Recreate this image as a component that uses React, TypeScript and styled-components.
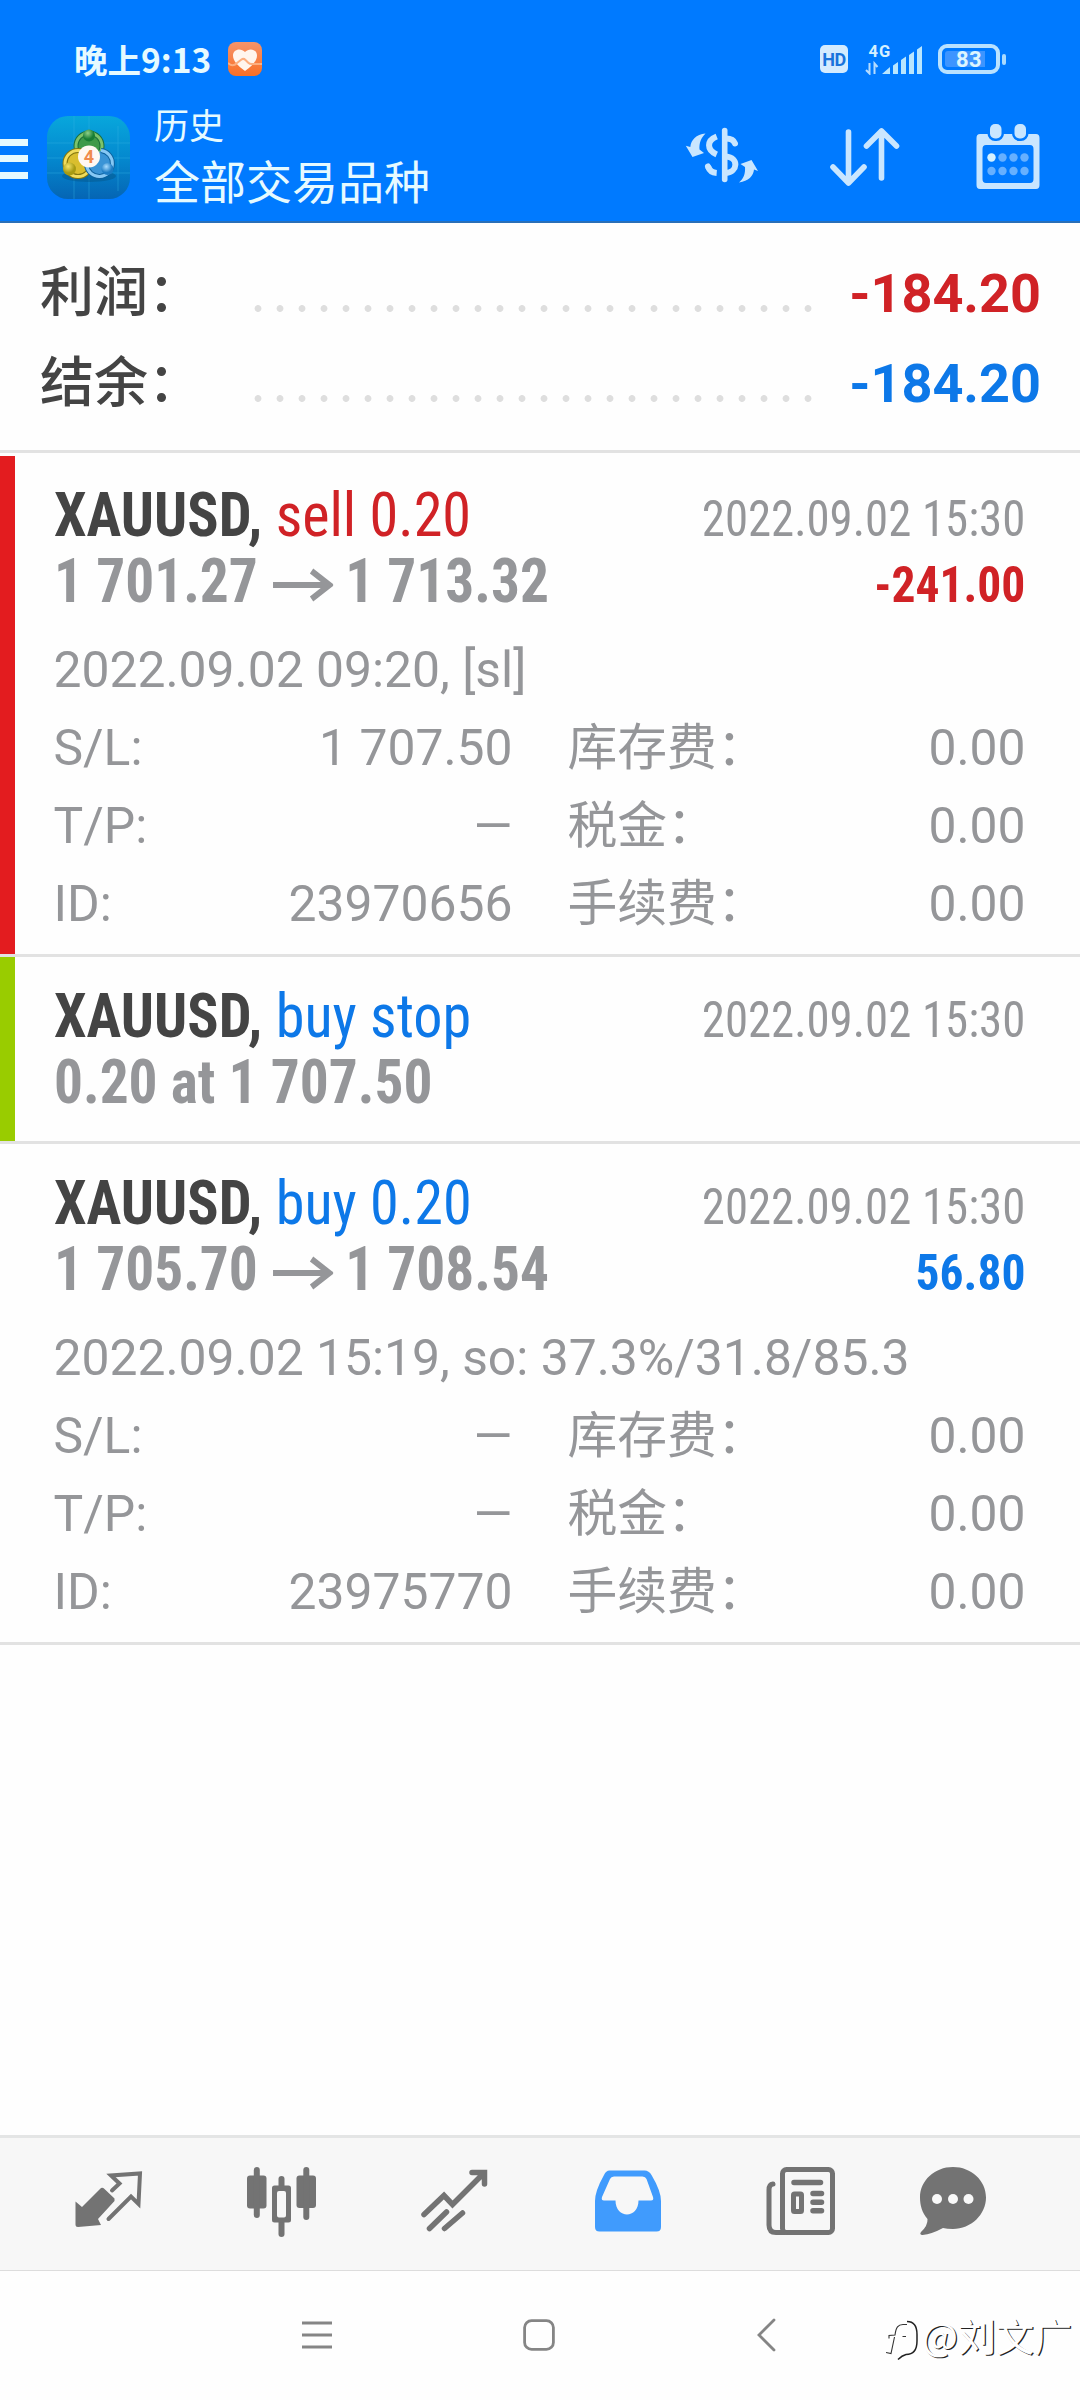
import React from "react";
import styled, { createGlobalStyle } from "styled-components";

const CJK = '"Noto Sans CJK SC", sans-serif';
const ROBOTO = `Roboto, ${CJK}`;
const CONDENSED = `"Roboto Condensed", Roboto, ${CJK}`;

const color = {
  brand: "#007aff",
  onBrand: "#e6faff",
  icon: "#c9e6ff",
  ink: "#444444",
  muted: "#959699",
  red: "#d02226",
  blue: "#0d78e8",
  line: "#e2e2e2",
  tab: "#737373",
  tabActive: "#409bfd",
};

const GlobalStyle = createGlobalStyle`
  body { margin: 0; background: #fefefe; }
  svg { display: block; flex: none; }
`;

const Screen = styled.div`
  width: 1080px;
  height: 2400px;
  display: flex;
  flex-direction: column;
  overflow: hidden;
  background: #fefefe;
  font-family: ${ROBOTO};
`;

/* ---------- header ---------- */
const Header = styled.header`
  box-sizing: border-box;
  height: 223px;
  flex: none;
  background: ${color.brand};
  border-bottom: 2px solid #2a6fb8;
`;

const StatusBar = styled.div`
  box-sizing: border-box;
  height: 92px;
  padding: 26px 74px 0 74px;
  display: flex;
  align-items: center;
`;

const Clock = styled.div`
  display: flex;
  align-items: center;
  color: ${color.onBrand};
  font: 700 33.5px/40px ${CJK};
  margin-right: 17px;
  white-space: nowrap;
`;

const StatusIcons = styled.div`
  margin-left: auto;
  display: flex;
  align-items: center;
`;

const HdBadge = styled.div`
  width: 28px;
  height: 28px;
  border-radius: 5px;
  background: #d3ebff;
  color: #1973dc;
  font: 700 18px/29px ${ROBOTO};
  text-align: center;
  letter-spacing: -0.5px;
`;

const Signal = styled.div`
  width: 58px;
  height: 32px;
  margin: 0 15px 0 17px;
`;

const Battery = styled.div`
  display: flex;
  align-items: center;
  gap: 2px;
`;

const BatteryBody = styled.div`
  box-sizing: border-box;
  width: 62px;
  height: 30px;
  padding: 3px;
  border: 4px solid #b9e2ff;
  border-radius: 9px;
`;

const BatteryLevel = styled.div`
  width: 100%;
  height: 100%;
  border-radius: 3px;
  background: linear-gradient(to right, #3d95ff 83%, transparent 83%);
  color: #dcf5ff;
  font: 700 22px/17px ${ROBOTO};
  text-align: center;
  letter-spacing: 0.5px;
`;

const BatteryNub = styled.div`
  width: 4px;
  height: 11px;
  border-radius: 2px;
  background: #a9dbff;
`;

const Toolbar = styled.div`
  height: 130px;
  display: flex;
  align-items: center;
`;

const Hamburger = styled.div`
  width: 27.5px;
  padding-top: 3px;
  display: grid;
  gap: 9.5px;
`;

const HamburgerBar = styled.span`
  height: 7px;
  background: #e6faff;
`;

const Titles = styled.div`
  padding-bottom: 3px;
  color: ${color.onBrand};
  font-family: ${CJK};
  white-space: nowrap;
`;

const ScreenName = styled.div`
  font-size: 35px;
  line-height: 44px;
`;

const Filter = styled.div`
  margin-top: 3px;
  font-size: 46px;
  line-height: 60px;
`;

const Actions = styled.div`
  margin-left: auto;
  display: flex;
  align-items: center;
  padding-right: 40px;
`;

/* ---------- totals ---------- */
const Totals = styled.section`
  padding: 21px 39px 26px 40px;
  border-bottom: 3px solid ${color.line};
  margin-bottom: 3px;
`;

const TotalRow = styled.div`
  height: 90px;
  line-height: 90px;
  display: flex;
  align-items: baseline;
`;

const TotalLabel = styled.span`
  width: 207px;
  font-family: ${CJK};
  font-size: 54px;
  font-weight: 500;
  color: ${color.ink};
  white-space: nowrap;
`;

const Leader = styled.span`
  width: 572px;
  height: 7px;
  background: radial-gradient(circle at 11px 3.5px, #dedede 3px, transparent 3.8px) 0 0 / 22px 7px repeat-x;
`;

const TotalValue = styled.span<{ $tone: string }>`
  margin-left: auto;
  font-size: 54px;
  font-weight: 700;
  color: ${(p) => p.$tone};
  white-space: nowrap;
`;

/* ---------- deals ---------- */
const Deal = styled.article<{ $bar?: string }>`
  box-sizing: border-box;
  display: flex;
  border-bottom: 3px solid ${color.line};
  &::before {
    content: "";
    flex: none;
    width: 15px;
    background: ${(p) => p.$bar ?? "transparent"};
  }
`;

const DealBody = styled.div<{ $bottom: number }>`
  flex: 1;
  padding: 26px 54.5px ${(p) => p.$bottom}px 38.5px;
  color: ${color.muted};
`;

const HeadRow = styled.div`
  height: 66px;
  line-height: 66px;
  display: flex;
  justify-content: space-between;
  align-items: baseline;
  font-family: ${CONDENSED};
  white-space: nowrap;
`;

const Title = styled.span`
  font-size: 61px;
  transform: scaleX(0.954);
  transform-origin: left;
`;

const Symbol = styled.b`
  color: ${color.ink};
  font-weight: 700;
`;

const Side = styled.span<{ $tone: string }>`
  color: ${(p) => p.$tone};
`;

const Price = styled(Title)`
  font-weight: 700;
  display: inline-flex;
  align-items: baseline;
  transform: scaleX(0.94);
`;

const Time = styled.span`
  font-size: 49.5px;
  transform: scaleX(0.945);
  transform-origin: right;
`;

const Profit = styled(Time)<{ $tone: string }>`
  font-weight: 700;
  color: ${(p) => p.$tone};
  transform: scaleX(0.96);
`;

const DetailLine = styled.div`
  margin-top: 17px;
  height: 78px;
  font-size: 49.8px;
  line-height: 78px;
  white-space: nowrap;
`;

const DetailGrid = styled.div`
  display: grid;
  grid-template-columns: 459px 458px;
  column-gap: 55px;
  font-size: 49.8px;
  line-height: 78px;
`;

const Field = styled.div`
  height: 78px;
  display: flex;
  justify-content: space-between;
  align-items: baseline;
  white-space: nowrap;
`;

/* ---------- bottom ---------- */
const Spacer = styled.div`
  flex: 1;
`;

const TabBar = styled.nav`
  box-sizing: border-box;
  height: 136px;
  flex: none;
  display: grid;
  grid-template-columns: repeat(5, 173px) 132px;
  align-items: center;
  justify-items: center;
  padding: 0 61px 6px 22px;
  border-top: 3px solid #e4e5e5;
  border-bottom: 1px solid #dddddd;
  background: #f7f7f7;
`;

const SystemNav = styled.div`
  position: relative;
  height: 129px;
  flex: none;
  display: flex;
  justify-content: center;
  align-items: center;
  gap: 191px;
  box-sizing: border-box;
  padding: 0 0 2px 2px;
`;

const Watermark = styled.div`
  position: absolute;
  right: 8px;
  top: 36px;
  display: flex;
  align-items: center;
  color: #ffffff;
  font: 400 38px/56px ${CJK};
  text-shadow: 1.2px 1.2px 0.5px #222222;
  white-space: nowrap;
`;

/* ---------- drawings ---------- */
const HealthIcon = () => (
  <svg width="34" height="34" viewBox="0 0 34 34">
    <defs>
      <linearGradient id="health" x1="0" y1="0" x2="0" y2="1">
        <stop offset="0" stopColor="#f5946a" />
        <stop offset="1" stopColor="#f96f26" />
      </linearGradient>
    </defs>
    <rect width="34" height="34" rx="8" fill="url(#health)" />
    <path d="M17 29C10 24 5 19 5 13.500C5 7 13 5.500 17 10C21 5.500 29 7 29 13.500C29 19 24 24 17 29Z" fill="#fff6ee" />
    <path d="M0 21C3 24 6 24 9 21L13.500 17.500Q15.500 16 17.500 18L20 20.500Q22 22.500 25 22H34" fill="none" stroke="#fcae7f" strokeWidth="2" />
  </svg>
);

const SignalBars = () => (
  <svg width="58" height="32" viewBox="0 0 58 32">
    <text x="3.500" y="13.500" fontFamily="Roboto, sans-serif" fontWeight="700" fontSize="16.500" letterSpacing="1" fill="#d5f0ff">4G</text>
    <path d="M4.500 20v10.500L1 27M9.500 31V20.500L12.500 24" fill="none" stroke="#b5dcff" strokeWidth="2" />
    <path d="M17 31l8-7v7zM28 31V22.500l5-3.500v12zM36 31V17l5-3.500V31zM44 31V12l5-3.500V31zM52 31V6.500L57 3V31z" fill="#b9e6ff" />
  </svg>
);

const AppLogo = () => (
  <svg width="83" height="83" viewBox="0 0 83 83" style={{ margin: "0 24.500px 0 19px" }}>
    <defs>
      <linearGradient id="tile" x1="0" y1="0" x2="0" y2="1">
        <stop offset="0" stopColor="#08a7dc" />
        <stop offset="0.500" stopColor="#0489cf" />
        <stop offset="1" stopColor="#0565b4" />
      </linearGradient>
      <radialGradient id="ballG" cx="0.4" cy="0.3"><stop offset="0" stopColor="#8fd08a" /><stop offset="1" stopColor="#187d33" /></radialGradient>
      <radialGradient id="ballY" cx="0.4" cy="0.3"><stop offset="0" stopColor="#f5e56a" /><stop offset="1" stopColor="#a69a12" /></radialGradient>
      <radialGradient id="ballB" cx="0.4" cy="0.3"><stop offset="0" stopColor="#a9dcff" /><stop offset="1" stopColor="#1c7cc4" /></radialGradient>
    </defs>
    <rect width="83" height="83" rx="21" fill="url(#tile)" />
    <path d="M27 0V83M42 0V83M71 10V75M0 27H83M0 42H83M0 57H83" stroke="#35b4e4" strokeWidth="0.8" opacity="0.5" />
    <ellipse cx="42" cy="60" rx="27" ry="6" fill="#064f7c" opacity="0.4" />
    <circle cx="42" cy="30" r="13" fill="#3f9a4a" stroke="#1c6f3a" strokeWidth="5" />
    <circle cx="42" cy="30" r="13" fill="none" stroke="#7cc36a" strokeWidth="3" />
    <circle cx="31" cy="47.500" r="13" fill="#d9be2e" stroke="#82760f" strokeWidth="5" />
    <circle cx="31" cy="47.500" r="13" fill="none" stroke="#f0dc5c" strokeWidth="3" />
    <path d="M54 34.500A13 13 0 1 1 39.500 49" fill="#3a94d6" stroke="#0d609c" strokeWidth="5" />
    <path d="M54 34.500A13 13 0 1 1 39.500 49" fill="none" stroke="#86c8f4" strokeWidth="3" />
    <circle cx="42" cy="19.500" r="6" fill="url(#ballG)" />
    <circle cx="22.500" cy="53" r="6.500" fill="url(#ballY)" />
    <circle cx="60.500" cy="53" r="6" fill="url(#ballB)" />
    <circle cx="42" cy="40.500" r="11" fill="#fff8f2" />
    <text x="42" y="47" textAnchor="middle" fontFamily="Roboto, sans-serif" fontWeight="700" fontSize="18" fill="#f08a4c">4</text>
  </svg>
);

const CurrencyIcon = () => (
  <svg width="100" height="90" viewBox="0 0 100 90" style={{ marginTop: -4 }}>
    <g fill="none" stroke={color.icon} strokeWidth="6">
      <path d="M54.700 20.500V69.500" strokeLinecap="round" strokeWidth="5.600" />
      <path d="M46.700 26.500C36.500 30.500 36.500 40 46.700 44.500" />
      <path d="M56 28.500C61.500 28.500 64 30.500 65 33.500" strokeLinecap="round" />
      <path d="M56 46.500C69 47.500 68 62 56 63" />
      <path d="M38 56.500Q40 62.500 46.700 63" />
      <path d="M38 56.500L38.500 57.500" strokeLinecap="round" />
    </g>
    <path d="M35.500 23.500C26 24.500 21 30 20.300 37L15.800 35.800L22.500 47L34 43L29.500 39.500C29 33 31 28 35.500 23.500Z" fill={color.icon} />
    <path d="M69 72.500C78.500 71 83.500 66 84 59.500L88 61L81.500 50L70.500 54L75 57C75.500 64 73.500 68.500 69 72.500Z" fill={color.icon} />
  </svg>
);

const SortIcon = () => (
  <svg width="72" height="64" viewBox="0 0 72 64" style={{ margin: "0 75.500px 0 59px" }}>
    <path d="M19.500 7V58M4 42L19.500 58L35 42M52.500 53V6M37.500 21L52.500 6L67.500 21" fill="none" stroke={color.icon} strokeWidth="5.600" strokeLinecap="round" strokeLinejoin="round" />
  </svg>
);

const CalendarIcon = () => (
  <svg width="64" height="68" viewBox="0 0 64 68" style={{ marginTop: -1 }}>
    <path fillRule="evenodd" d="M4 11H60Q63.500 11 63.500 15V62Q63.500 66 60 66H4Q0.500 66 0.500 62V15Q0.500 11 4 11ZM10 22Q6.500 22 6.500 26V56Q6.500 60 10 60H54Q57.500 60 57.500 56V26Q57.500 22 54 22Z" fill={color.icon} />
    <rect x="14" y="1" width="11.500" height="14.500" rx="5" fill={color.icon} stroke={color.brand} strokeWidth="5" paintOrder="stroke" />
    <rect x="38.500" y="1" width="11.500" height="14.500" rx="5" fill={color.icon} stroke={color.brand} strokeWidth="5" paintOrder="stroke" />
    {[34.5, 48].map((y, r) =>
      [15.5, 26.5, 37.5, 48.5].map((x, c) => (
        <circle key={`${r}${c}`} cx={x} cy={y} r="4.200" fill={r === 0 && c === 0 ? "#d6f2ff" : "#66b0ff"} />
      ))
    )}
  </svg>
);

const Arrow = () => (
  <svg width="64" height="34" viewBox="0 0 64 34" style={{ margin: "0 13px 0 16px" }}>
    <path d="M0 17H58M41 3L60 17L41 31" fill="none" stroke={color.muted} strokeWidth="6" />
  </svg>
);

const QuotesIcon = () => (
  <svg width="84" height="84" viewBox="0 0 84 84">
    <path d="M8.500 42.500L15 48L33 30Q35 27.500 37.500 30L47.500 39.500L47.500 42L31 60L34 66L11 68Q8.500 68 8.500 65.500Z" fill={color.tab} />
    <path d="M45 31.500L52.500 24.500L44 16.500L73 14.500L71.500 45L64 37.500L41.500 60" fill="none" stroke={color.tab} strokeWidth="4" strokeLinecap="round" />
  </svg>
);

const ChartIcon = () => (
  <svg width="84" height="84" viewBox="0 0 84 84">
    <g fill={color.tab}>
      <rect x="7" y="16.500" width="19.500" height="33" rx="3" />
      <rect x="13.800" y="8" width="6" height="51" rx="3" />
      <rect x="56.500" y="16.500" width="19.500" height="32.500" rx="3" />
      <rect x="63.300" y="8" width="6" height="53" rx="3" />
      <rect x="38.500" y="17" width="6" height="14" rx="3" />
      <rect x="38.500" y="60" width="6" height="18" rx="3" />
      <path fillRule="evenodd" d="M34.500 26.500H48.500Q51 26.500 51 29V61Q51 63.500 48.500 63.500H34.500Q32 63.500 32 61V29Q32 26.500 34.500 26.500ZM39 32Q37 32 37 34V56.500Q37 58.500 39 58.500H44Q46 58.500 46 56.500V34Q46 32 44 32Z" />
    </g>
  </svg>
);

const TradeIcon = () => (
  <svg width="84" height="84" viewBox="0 0 84 84">
    <path d="M11 55.500L31 36.500L39.500 45.500L71 14M59 13.500H71.500V25M16.500 69.500L33.500 53M31.500 69.500L49.500 54" fill="none" stroke={color.tab} strokeWidth="5.500" strokeLinecap="round" />
  </svg>
);

const HistoryIcon = () => (
  <svg width="84" height="84" viewBox="0 0 84 84">
    <path fillRule="evenodd" d="M23.500 11.500H58.500Q63 11.500 65.500 16Q75 32 75 42V68Q75 72.500 70.500 72.500H13.500Q9 72.500 9 68V42Q9 32 18 16Q20 11.500 23.500 11.500ZM28 17.500Q25 17.500 24 20L16 38Q15 41.500 18 41.500H29.500C29.500 60 52.500 60 52.500 41.500H65Q68 41.500 67 38L60.500 20Q59.500 17.500 56.500 17.500Z" fill={color.tabActive} />
  </svg>
);

const NewsIcon = () => (
  <svg width="84" height="84" viewBox="0 0 84 84">
    <g fill="none" stroke={color.tab} strokeLinecap="round">
      <rect x="23.500" y="10.500" width="50" height="63" rx="4" strokeWidth="5" />
      <path d="M14 25Q10 25.500 10 31V66Q10 73.500 17 73.500H26" strokeWidth="5" />
      <path d="M35 23.500H61.500M54 34.500H62.500M54 43.200H62.500M54 51.800H62.500" strokeWidth="5.500" />
      <rect x="34.500" y="35" width="8" height="17.500" rx="1" strokeWidth="5" />
    </g>
  </svg>
);

const ChatIcon = () => (
  <svg width="68" height="84" viewBox="0 0 68 84">
    <path d="M34 8C52.500 8 67 21.500 67 38.500C67 55.500 52 70 34 70Q28 70 24 69Q13 75 3.500 76Q0 75.500 2 73Q9 66.500 8.500 60C3 53.500 1 46.500 1 38.500C1 21.500 15.500 8 34 8Z" fill={color.tab} />
    <g fill="#f9f9f9">
      <circle cx="18" cy="40" r="5" />
      <circle cx="34" cy="40" r="5" />
      <circle cx="49.500" cy="40" r="5" />
    </g>
  </svg>
);

const MenuKey = () => (
  <svg width="30" height="32" viewBox="0 0 30 32">
    <path d="M0 4H30M0 16H30M0 28H30" stroke="#858585" strokeWidth="2.800" />
  </svg>
);

const HomeKey = () => (
  <svg width="32" height="32" viewBox="0 0 32 32">
    <rect x="1.600" y="1.600" width="28.800" height="28.800" rx="7" fill="none" stroke="#858585" strokeWidth="2.800" />
  </svg>
);

const BackKey = () => (
  <svg width="34" height="34" viewBox="0 0 34 34">
    <path d="M28 2L13 17L28 32" fill="none" stroke="#858585" strokeWidth="2.800" strokeLinecap="round" />
  </svg>
);

const WatermarkLogo = () => (
  <svg width="36" height="56" viewBox="0 0 36 56">
    <path d="M21 14.500C29 14.500 31 20 31 27.500V34C31 43 27 47.500 20 47.500Q16 48.500 12 52.500" fill="none" stroke="#222" strokeWidth="1.500" />
    <path d="M21 17.500H17C12 17.500 10 20.500 9 28L3 28.500V31.500M8.500 30L5 46.500L0 45.500M16.500 29.500H20" fill="none" stroke="#333" strokeWidth="1.100" />
  </svg>
);

/* ---------- content ---------- */
type DealData = {
  bar?: string;
  side: string;
  tone: string;
  price: React.ReactNode;
  time: string;
  profit?: [string, string];
  note?: string;
  fields?: [string, string][];
};

const deals: DealData[] = [
  {
    bar: "#e31c1f",
    side: "sell 0.20",
    tone: color.red,
    price: <>1 701.27<Arrow />1 713.32</>,
    time: "2022.09.02 15:30",
    profit: ["-241.00", color.red],
    note: "2022.09.02 09:20, [sl]",
    fields: [
      ["S/L:", "1 707.50"], ["库存费：", "0.00"],
      ["T/P:", "—"], ["税金：", "0.00"],
      ["ID:", "23970656"], ["手续费：", "0.00"],
    ],
  },
  {
    bar: "#99cc00",
    side: "buy stop",
    tone: color.blue,
    price: "0.20 at 1 707.50",
    time: "2022.09.02 15:30",
  },
  {
    side: "buy 0.20",
    tone: color.blue,
    price: <>1 705.70<Arrow />1 708.54</>,
    time: "2022.09.02 15:30",
    profit: ["56.80", color.blue],
    note: "2022.09.02 15:19, so: 37.3%/31.8/85.3",
    fields: [
      ["S/L:", "—"], ["库存费：", "0.00"],
      ["T/P:", "—"], ["税金：", "0.00"],
      ["ID:", "23975770"], ["手续费：", "0.00"],
    ],
  },
];

export default function App() {
  return (
    <Screen>
      <GlobalStyle />
      <Header>
        <StatusBar>
          <Clock>晚上9:13</Clock>
          <HealthIcon />
          <StatusIcons>
            <HdBadge>HD</HdBadge>
            <Signal><SignalBars /></Signal>
            <Battery>
              <BatteryBody><BatteryLevel>83</BatteryLevel></BatteryBody>
              <BatteryNub />
            </Battery>
          </StatusIcons>
        </StatusBar>
        <Toolbar>
          <Hamburger><HamburgerBar /><HamburgerBar /><HamburgerBar /></Hamburger>
          <AppLogo />
          <Titles>
            <ScreenName>历史</ScreenName>
            <Filter>全部交易品种</Filter>
          </Titles>
          <Actions>
            <CurrencyIcon />
            <SortIcon />
            <CalendarIcon />
          </Actions>
        </Toolbar>
      </Header>

      <Totals>
        <TotalRow>
          <TotalLabel>利润：</TotalLabel>
          <Leader />
          <TotalValue $tone={color.red}>-184.20</TotalValue>
        </TotalRow>
        <TotalRow>
          <TotalLabel>结余：</TotalLabel>
          <Leader />
          <TotalValue $tone={color.blue}>-184.20</TotalValue>
        </TotalRow>
      </Totals>

      {deals.map((deal, i) => (
        <Deal key={i} $bar={deal.bar}>
          <DealBody $bottom={deal.fields ? 11 : 26}>
            <HeadRow>
              <Title><Symbol>XAUUSD,</Symbol> <Side $tone={deal.tone}>{deal.side}</Side></Title>
              <Time>{deal.time}</Time>
            </HeadRow>
            <HeadRow>
              <Price>{deal.price}</Price>
              {deal.profit && <Profit $tone={deal.profit[1]}>{deal.profit[0]}</Profit>}
            </HeadRow>
            {deal.note && <DetailLine>{deal.note}</DetailLine>}
            {deal.fields && (
              <DetailGrid>
                {deal.fields.map(([label, value]) => (
                  <Field key={label}><span>{label}</span><span>{value}</span></Field>
                ))}
              </DetailGrid>
            )}
          </DealBody>
        </Deal>
      ))}

      <Spacer />
      <TabBar>
        <QuotesIcon />
        <ChartIcon />
        <TradeIcon />
        <HistoryIcon />
        <NewsIcon />
        <ChatIcon />
      </TabBar>
      <SystemNav>
        <MenuKey />
        <HomeKey />
        <BackKey />
        <Watermark><WatermarkLogo />@刘文广</Watermark>
      </SystemNav>
    </Screen>
  );
}
